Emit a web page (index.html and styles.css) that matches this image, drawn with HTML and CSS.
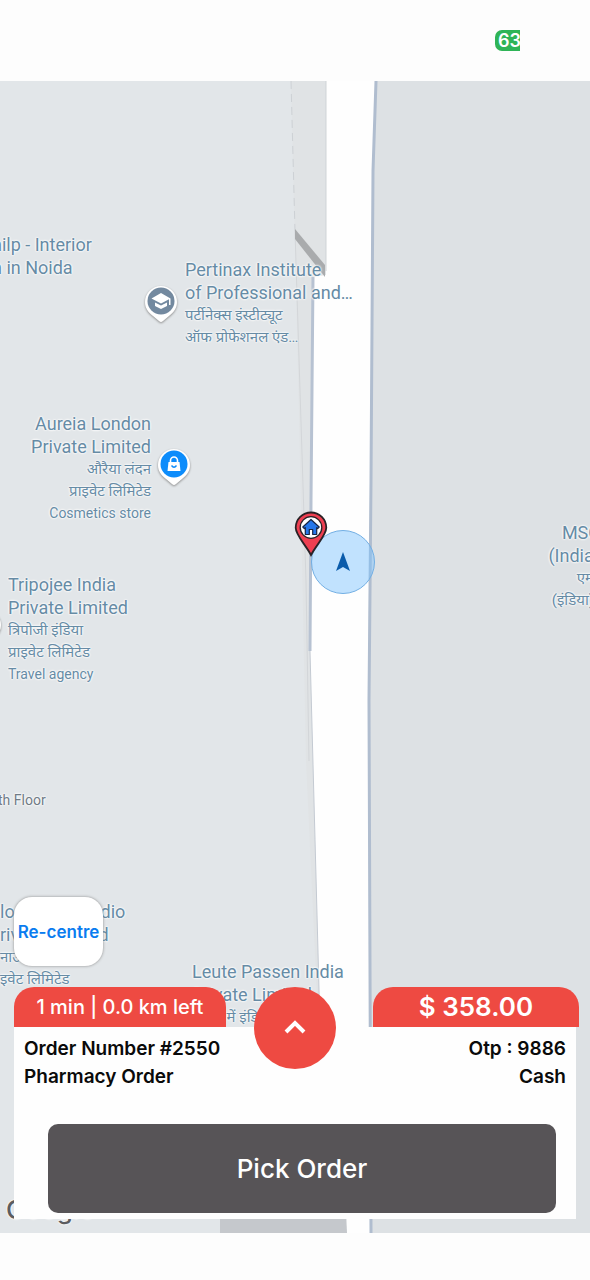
FILE: index.html
```
<!DOCTYPE html>
<html lang="en">
<head>
  <meta charset="utf-8">
  <meta name="viewport" content="width=device-width, initial-scale=1">
  <title>Delivery Navigation</title>
  <link rel="stylesheet" href="styles.css">
</head>
<body>
  <header class="status-bar">
    <span class="battery">63</span>
  </header>

  <main class="map">
    <!-- roads and blocks -->
    <svg class="map-tiles" viewBox="0 0 590 1152" preserveAspectRatio="none" aria-hidden="true">
      <rect width="590" height="1152" fill="#e2e6e9"/>
      <path d="M291 0L326 0V194L313 200L311 420L310 570L320 946L345 1152H328L306 680L299 330Z" fill="#e0e3e5"/>
      <path d="M291 0L295 150" fill="none" stroke="#cdd1d5" stroke-width="1" stroke-dasharray="8 5"/>
      <path d="M295 150L306 500L309 680" fill="none" stroke="#d3d6d9" stroke-width="1"/>
      <path d="M326 0H376L373 90L370 400L368 620L370 1152H346L320 946L310 570L311 420L313 196L326 194Z" fill="#fefefe"/>
      <path d="M376 0H590V1152H371L369 620L371 400L373 90Z" fill="#dde1e4"/>
      <path d="M376 0L373 90L371 400L369 620L371 1152" fill="none" stroke="#b0bdcf" stroke-width="3"/>
      <path d="M313 196L311 420L310 570" fill="none" stroke="#b7c2d2" stroke-width="3"/>
      <path d="M310 570L320 946" fill="none" stroke="#c4cad2" stroke-width="1"/>
      <path d="M326 0V190" fill="none" stroke="#cfd3d6" stroke-width="1"/>
      <path d="M295 148L325 184V196L295 158Z" fill="#a9abad"/>
      <path d="M220 1130H346L347 1152H220Z" fill="#c5c8cc"/>
    </svg>

    <div class="place silp">hilp - Interior<br>n in Noida</div>
    <div class="place pertinax">Pertinax Institute<br>of Professional and…
      <small lang="hi">पर्टीनेक्स इंस्टीट्यूट<br>ऑफ प्रोफेशनल एंड…</small>
    </div>
    <div class="place aureia">Aureia London<br>Private Limited
      <small lang="hi">औरैया लंदन<br>प्राइवेट लिमिटेड</small>
      <small>Cosmetics store</small>
    </div>
    <div class="place tripojee">Tripojee India<br>Private Limited
      <small lang="hi">त्रिपोजी इंडिया<br>प्राइवेट लिमिटेड</small>
      <small>Travel agency</small>
    </div>
    <div class="place msc">MSC<br>(India)
      <small lang="hi">एम<br>(इंडिया)</small>
    </div>
    <div class="place floor"><small>th Floor</small></div>
    <div class="place studio">lo Dance Studio<br>rivate Limited
      <small lang="hi">नाउ<br>इवेट लिमिटेड</small>
    </div>
    <div class="place leute">Leute Passen India<br>Private Limited
      <small lang="hi">पासेन में इंडिया</small>
    </div>
    <div class="google">Google</div>

    <svg class="pin pin-school" viewBox="0 0 36 40" aria-hidden="true">
      <path d="M18 2a16 16 0 0 0-16 16c0 6 3 10 8 14l6 5q2 2 4 0l6-5c5-4 8-8 8-14A16 16 0 0 0 18 2Z" fill="#fff"/>
      <circle cx="18" cy="17" r="13.5" fill="#73899f"/>
      <path d="M18 9L8.5 14.5L18 19.5L26 15.3V21H27.5V14.5Z M12 18.5V22L18 25L24 22V18.5L18 21.5Z" fill="#fff"/>
    </svg>
    <svg class="pin pin-shop" viewBox="0 0 36 40" aria-hidden="true">
      <path d="M18 2a16 16 0 0 0-16 16c0 6 3 10 8 14l6 5q2 2 4 0l6-5c5-4 8-8 8-14A16 16 0 0 0 18 2Z" fill="#fff"/>
      <circle cx="18" cy="17" r="13.5" fill="#0c8cfb"/>
      <path d="M12.5 15H23.5L24.5 24H11.5Z" fill="#fff"/>
      <path d="M14.5 16V13.5a3.5 3.5 0 0 1 7 0V16" fill="none" stroke="#fff" stroke-width="1.6"/>
      <path d="M15.5 18.5Q18 22 20.5 18.5" fill="none" stroke="#0c8cfb" stroke-width="1.3"/>
    </svg>
    <svg class="pin pin-travel" viewBox="0 0 36 40" aria-hidden="true">
      <path d="M18 2a16 16 0 0 0-16 16c0 6 3 10 8 14l6 5q2 2 4 0l6-5c5-4 8-8 8-14A16 16 0 0 0 18 2Z" fill="#fff"/>
      <circle cx="18" cy="17" r="13.5" fill="#73899f"/>
    </svg>

    <div class="location">
      <svg viewBox="0 0 16 20" aria-hidden="true"><path d="M8 0L15 19L8 15L1 19Z" fill="#0b5cab"/></svg>
    </div>
    <svg class="home-pin" viewBox="0 0 34 46" aria-hidden="true">
      <path d="M17 1.5a15.3 15.3 0 0 0-15.3 15.3C1.7 24 11 33 17 44C23 33 32.3 24 32.3 16.8A15.3 15.3 0 0 0 17 1.5Z" fill="#ee3f51" stroke="#2a2226" stroke-width="1.8"/>
      <circle cx="17" cy="16.5" r="10.8" fill="#fff" stroke="#2a2226" stroke-width="1.3"/>
      <path d="M17 8.5L8.8 16L10.3 17.5L11.3 16.7V23.5H15.3V18.5H18.7V23.5H22.7V16.7L23.7 17.5L25.2 16Z" fill="#2677ea" stroke="#172544" stroke-width="1.2" stroke-linejoin="round"/>
    </svg>

    <button class="recentre" type="button">Re-centre</button>

    <section class="order">
      <div class="order-tabs">
        <div class="tab tab-eta">1 min | 0.0 km left</div>
        <div class="tab tab-price">$ 358.00</div>
        <button class="expand" type="button" aria-label="Show order details">
          <svg viewBox="0 0 24 16" aria-hidden="true"><path d="M3 13L12 4L21 13" fill="none" stroke="#fff" stroke-width="4"/></svg>
        </button>
      </div>
      <div class="order-body">
        <div class="order-row"><span>Order Number #2550</span><span>Otp : 9886</span></div>
        <div class="order-row"><span>Pharmacy Order</span><span>Cash</span></div>
        <button class="pick" type="button">Pick Order</button>
      </div>
    </section>
  </main>
</body>
</html>
```
FILE: styles.css
```
* {
  box-sizing: border-box;
}
body {
  margin: 0;
  min-height: 100vh;
  display: flex;
  flex-direction: column;
  padding-bottom: 47px;
  background-color: #fdfdfd;
  font-family: Inter, "Noto Sans", sans-serif;
  overflow-x: hidden;
}
button {
  border: none;
  padding: 0;
  font-family: inherit;
  cursor: pointer;
}
.status-bar {
  height: 81px;
  display: flex;
  align-items: center;
  justify-content: flex-end;
  padding-right: 70px;
}
.battery {
  width: 25px;
  height: 21px;
  padding-left: 3px;
  border-radius: 7px 0 0 7px;
  overflow: hidden;
  background-color: #2fb457;
  color: #fff;
  font-size: 18px;
  font-weight: 600;
  line-height: 21px;
}
.map {
  position: relative;
  flex: 1;
  display: flex;
  flex-direction: column;
  justify-content: flex-end;
  padding: 0 14px 14px;
  overflow: hidden;
}
.map-tiles {
  position: absolute;
  top: 0;
  left: 0;
  width: 100%;
  height: 100%;
}

/* place names */
.place {
  position: absolute;
  color: #668ba5;
  font-family: Roboto, "Noto Sans", sans-serif;
  font-size: 18px;
  line-height: 23px;
  white-space: nowrap;
  text-shadow: 0 0 2px #fff, 0 0 2px #fff, 0 0 3px #fff;
}
.place small {
  display: block;
  font-size: 14px;
  line-height: 22px;
}
.place small:lang(hi) {
  font-size: 15px;
}
.silp {
  left: -8px;
  top: 152px;
}
.pertinax {
  left: 185px;
  top: 177px;
}
.aureia {
  right: 439px;
  top: 331px;
  text-align: right;
}
.tripojee {
  left: 8px;
  top: 492px;
}
.msc {
  right: -10px;
  top: 440px;
  text-align: right;
}
.msc small {
  padding-right: 6px;
}
.place.floor {
  left: -2px;
  top: 708px;
  color: #6f7b86;
}
.studio {
  left: 0;
  top: 819px;
}
.leute {
  left: 192px;
  top: 879px;
}
.google {
  position: absolute;
  left: 6px;
  bottom: 6px;
  color: #5c5d60;
  font-size: 26px;
  font-weight: 500;
  line-height: 34px;
  text-shadow: 0 0 2px #fff, 0 0 2px #fff;
}

/* markers */
.pin {
  position: absolute;
  width: 36px;
  height: 40px;
  filter: drop-shadow(0 1px 1px #8c8c8c);
}
.pin-school {
  left: 143px;
  top: 203px;
}
.pin-shop {
  left: 156px;
  top: 366px;
}
.pin-travel {
  left: -33px;
  top: 526px;
}
.location {
  position: absolute;
  left: 311px;
  top: 449px;
  width: 64px;
  height: 64px;
  display: grid;
  place-items: center;
  border: 1px solid #72afe4;
  border-radius: 50%;
  background-color: rgba(120, 193, 255, 0.45);
}
.location svg {
  width: 16px;
  height: 20px;
}
.home-pin {
  position: absolute;
  left: 294px;
  top: 430px;
  width: 34px;
  height: 46px;
}

.recentre {
  position: relative;
  align-self: flex-start;
  width: 89px;
  height: 69px;
  margin-bottom: 21px;
  border-radius: 18px;
  background-color: #fff;
  box-shadow: 0 0 3px #8a8a8a;
  color: #0a7cf0;
  font-size: 17px;
  font-weight: 600;
}

/* order panel */
.order {
  position: relative;
  color: #0a0a0a;
}
.order-tabs {
  position: relative;
  display: flex;
  justify-content: space-between;
  margin-right: -3px;
}
.tab {
  height: 40px;
  border-radius: 20px 20px 0 0;
  background-color: #ee4a42;
  color: #fff;
  line-height: 40px;
  text-align: center;
}
.tab-eta {
  width: 37.5%;
  font-size: 20px;
  font-weight: 500;
}
.tab-price {
  width: 36.5%;
  font-size: 26px;
  font-weight: 600;
}
.expand {
  position: absolute;
  left: 240px;
  top: 0;
  width: 82px;
  height: 82px;
  border-radius: 50%;
  background-color: #ee4a42;
}
.expand svg {
  width: 24px;
  height: 16px;
}
.order-body {
  padding: 8px 10px 6px;
  background-color: #fefefe;
}
.order-row {
  display: flex;
  justify-content: space-between;
  font-size: 19px;
  font-weight: 600;
  line-height: 28px;
}
.pick {
  display: block;
  width: calc(100% - 34px);
  height: 89px;
  margin: 33px 10px 0 24px;
  border-radius: 10px;
  background-color: #575457;
  color: #fff;
  font-size: 26px;
  font-weight: 500;
}
```
